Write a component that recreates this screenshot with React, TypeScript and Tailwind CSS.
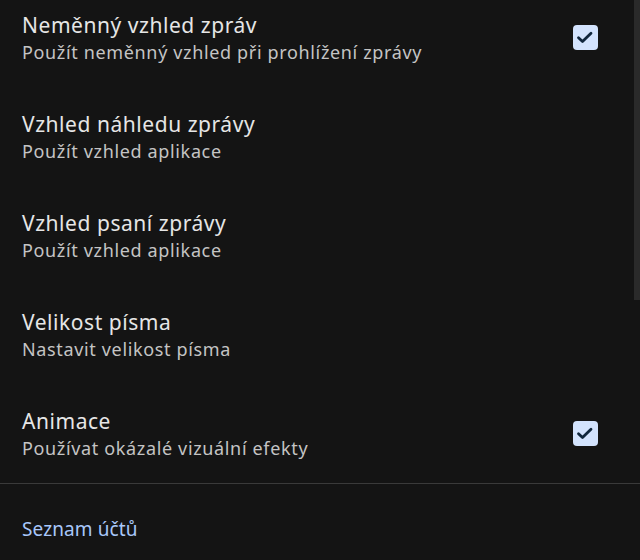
import React from "react";

type Row = { title: string; subtitle: string; checked?: boolean };

const rows: Row[] = [
  { title: "Neměnný vzhled zpráv", subtitle: "Použít neměnný vzhled při prohlížení zprávy", checked: true },
  { title: "Vzhled náhledu zprávy", subtitle: "Použít vzhled aplikace" },
  { title: "Vzhled psaní zprávy", subtitle: "Použít vzhled aplikace" },
  { title: "Velikost písma", subtitle: "Nastavit velikost písma" },
  { title: "Animace", subtitle: "Používat okázalé vizuální efekty", checked: true },
];

function Check() {
  return (
    <div className="w-[25px] h-[25px] rounded-[4px] bg-[#d3e3fd] flex items-center justify-center">
      <svg width="25" height="25" viewBox="0 0 25 25" fill="none">
        <path d="M5.5 12.8l4 3.8l8.5-8.3" stroke="#10263c" strokeWidth="2.8" strokeLinecap="round" strokeLinejoin="round" />
      </svg>
    </div>
  );
}

export default function App() {
  return (
    <div
      className="relative w-[640px] h-[560px] overflow-hidden bg-[#141414]"
      style={{ fontFamily: "'Noto Sans', Roboto, sans-serif" }}
    >
      <div className="-mt-[12px]">
        {rows.map((r) => (
          <div key={r.title} className="h-[99px] flex items-center pl-[22px] pr-[42px]">
            <div className="flex-1 flex flex-col">
              <div className="text-[21px] leading-[28px] text-[#e6e6e6] tracking-[0.55px]">{r.title}</div>
              <div className="text-[18px] leading-[26px] text-[#c4c4c4] tracking-[0.65px]">{r.subtitle}</div>
            </div>
            {r.checked && <Check />}
          </div>
        ))}
      </div>
      <div className="h-px bg-[#3a3a3a]" />
      <div className="pl-[22px] pt-[33px] text-[19px] leading-[24px] text-[#a8c7fa] tracking-[0.1px]">
        Seznam účtů
      </div>
      <div className="absolute right-0 top-0 w-[6px] h-[300px] bg-[#2a2a2a]" />
    </div>
  );
}
